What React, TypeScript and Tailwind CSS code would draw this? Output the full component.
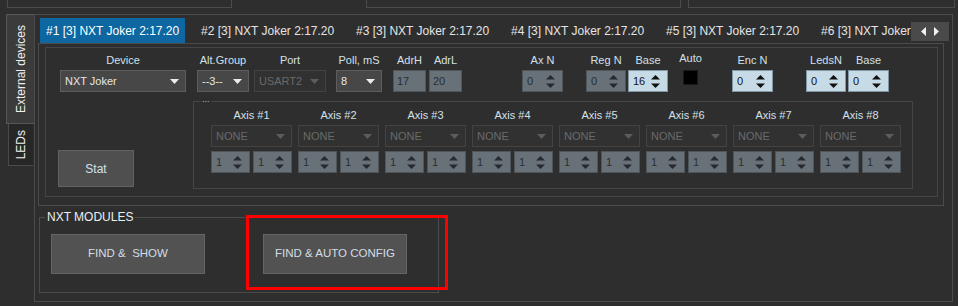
import React from 'react';

const LABEL = 'text-[11px] leading-[14px] text-[#d3e0ea] whitespace-nowrap';

function Caret({ color = '#e8e8e8' }: { color?: string }) {
  return (
    <svg width="9" height="5" viewBox="0 0 9 5" className="shrink-0">
      <path d="M0 0h9L4.5 5z" fill={color} />
    </svg>
  );
}

function Combo({ value, w, disabled }: { value: string; w: string; disabled?: boolean }) {
  return (
    <div
      className={`${w} h-[22px] flex items-center justify-between pl-[4px] pr-[6px] border text-[11px] ${
        disabled
          ? 'bg-[#313131] border-[#434343] text-[#6a6a6a]'
          : 'bg-[#474747] border-[#5d5d5d] text-[#e6e6e6]'
      }`}
    >
      <span>{value}</span>
      <Caret color={disabled ? '#5c5c5c' : '#ececec'} />
    </div>
  );
}

function Spin({ value, w, light }: { value: string; w: string; light?: boolean }) {
  const c = light ? '#111' : '#262a2d';
  return (
    <div
      className={`${w} h-[22px] flex items-center justify-between pl-[4px] pr-[7px] border text-[11px] ${
        light ? 'bg-[#c7dbe7] border-[#8197a5] text-[#111]' : 'bg-[#687178] border-[#4e555b] text-[#2a2e31]'
      }`}
    >
      <span>{value}</span>
      <svg width="9" height="13" viewBox="0 0 9 13">
        <path d="M4.5 0L9 4.5H0z" fill={c} />
        <path d="M0 8.5h9L4.5 13z" fill={c} />
      </svg>
    </div>
  );
}

function Edit({ value }: { value: string }) {
  return (
    <div className="w-[33px] h-[22px] flex items-center pl-[3px] border bg-[#687178] border-[#4e555b] text-[11px] text-[#2a2e31]">
      {value}
    </div>
  );
}

function Field({ label, ml, w, children }: { label: string; ml: string; w: string; children: React.ReactNode }) {
  return (
    <div className={`${ml} ${w} flex flex-col items-center gap-[3px] shrink-0`}>
      <span className={LABEL}>{label}</span>
      {children}
    </div>
  );
}

const tabs = [1, 2, 3, 4, 5, 6];
const axes = [1, 2, 3, 4, 5, 6, 7, 8];

export default function App() {
  return (
    <div className="w-[958px] h-[306px] bg-[#2e2e2e] relative overflow-hidden font-['Liberation_Sans',Arial,sans-serif]">
      {/* cut-off panels at top */}
      <div className="flex h-[14px]">
        <div className="ml-[7px] w-[225px] h-[8px] border-x border-b border-[#4b4b4b]" />
        <div className="ml-[134px] w-[315px] h-[8px] border-x border-b border-[#4b4b4b]" />
        <div className="ml-[7px] w-[267px] h-[8px] border-x border-b border-[#4b4b4b]" />
      </div>

      <div className="flex">
        {/* vertical tabs */}
        <div className="w-[34px] flex flex-col">
          <div className="ml-[6px] w-[28px] h-[110px] bg-[#3b3b3b] border-l border-y border-[#575757] flex items-center justify-center">
            <span className="[writing-mode:vertical-rl] rotate-180 text-[12px] text-[#f0f0f0] whitespace-nowrap">
              External devices
            </span>
          </div>
          <div className="ml-[8px] w-[25px] h-[42px] bg-[#272727] border-l border-b border-[#4b4b4b] flex items-center justify-center">
            <span className="[writing-mode:vertical-rl] rotate-180 text-[12px] text-[#f0f0f0]">LEDs</span>
          </div>
        </div>

        {/* outer panel */}
        <div className="w-[919px] h-[288px] border border-[#4b4b4b] flex flex-col">
          {/* tab header */}
          <div className="mt-[3px] h-[25px] flex">
            <div className="ml-[5px] w-[871px] flex gap-[10px] overflow-hidden">
              {tabs.map((n) => (
                <div
                  key={n}
                  className={`w-[145px] shrink-0 h-[25px] flex items-center px-[6px] text-[12px] whitespace-nowrap ${
                    n === 1 ? 'bg-[#0e67a0] text-white' : 'text-[#e4e4e4]'
                  }`}
                >
                  #{n} [3] NXT Joker 2:17.20
                </div>
              ))}
            </div>
            <div className="mt-[4px] w-[38px] h-[19px] bg-[#4a4a4a] flex items-center justify-around px-[6px]">
              <svg width="5" height="9" viewBox="0 0 5 9">
                <path d="M5 0v9L0 4.5z" fill="#f2f2f2" />
              </svg>
              <svg width="5" height="9" viewBox="0 0 5 9">
                <path d="M0 0v9l5-4.5z" fill="#f2f2f2" />
              </svg>
            </div>
          </div>

          {/* tab page */}
          <div className="ml-[3px] w-[906px] h-[163px] border border-[#4b4b4b]">
            <div className="ml-[6px] mt-[3px] w-[893px] h-[150px] border border-[#454545]">
              {/* top controls */}
              <div className="flex mt-[5px]">
                <Field label="Device" ml="ml-[14px]" w="w-[126px]">
                  <Combo value="NXT Joker" w="w-[126px]" />
                </Field>
                <Field label="Alt.Group" ml="ml-[11px]" w="w-[52px]">
                  <Combo value="--3--" w="w-[52px]" />
                </Field>
                <Field label="Port" ml="ml-[5px]" w="w-[72px]">
                  <Combo value="USART2" w="w-[72px]" disabled />
                </Field>
                <Field label="Poll, mS" ml="ml-[10px]" w="w-[46px]">
                  <Combo value="8" w="w-[46px]" />
                </Field>
                <Field label="AdrH" ml="ml-[11px]" w="w-[33px]">
                  <Edit value="17" />
                </Field>
                <Field label="AdrL" ml="ml-[3px]" w="w-[33px]">
                  <Edit value="20" />
                </Field>
                <Field label="Ax N" ml="ml-[60px]" w="w-[41px]">
                  <Spin value="0" w="w-[41px]" />
                </Field>
                <Field label="Reg N" ml="ml-[23px]" w="w-[40px]">
                  <Spin value="0" w="w-[40px]" />
                </Field>
                <Field label="Base" ml="ml-[2px]" w="w-[40px]">
                  <Spin value="16" w="w-[40px]" light />
                </Field>
                <div className="ml-[15px] w-[15px] flex flex-col items-center">
                  <span className={`${LABEL} -mt-[2px]`}>Auto</span>
                  <div className="mt-[5px] w-[15px] h-[15px] bg-black border border-[#1a1a1a]" />
                </div>
                <Field label="Enc N" ml="ml-[34px]" w="w-[41px]">
                  <Spin value="0" w="w-[41px]" light />
                </Field>
                <Field label="LedsN" ml="ml-[33px]" w="w-[40px]">
                  <Spin value="0" w="w-[40px]" light />
                </Field>
                <Field label="Base" ml="ml-[2px]" w="w-[41px]">
                  <Spin value="0" w="w-[41px]" light />
                </Field>
              </div>

              {/* stat + axes */}
              <div className="flex items-start mt-[9px]">
                <button className="ml-[12px] mt-[49px] w-[76px] h-[37px] bg-[#4f4f4f] border border-[#626262] text-[12px] text-[#d3e0ea]">
                  Stat
                </button>
                <div className="relative ml-[59px] w-[720px] h-[88px] border border-[#454545] pl-[17px] pt-[6px] flex gap-[6px]">
                  <span className="absolute -top-[9px] left-[7px] px-[1px] bg-[#2e2e2e] text-[9px] leading-[12px] text-[#b9c6d2]">
                    ...
                  </span>
                  {axes.map((a) => (
                    <div key={a} className="w-[81px] flex flex-col items-center gap-[3px]">
                      <span className={LABEL}>Axis #{a}</span>
                      <Combo value="NONE" w="w-[81px]" disabled />
                      <div className="w-[81px] flex justify-between mt-[1px]">
                        <Spin value="1" w="w-[39px]" />
                        <Spin value="1" w="w-[39px]" />
                      </div>
                    </div>
                  ))}
                </div>
              </div>
            </div>
          </div>

          {/* NXT modules */}
          <div className="relative ml-[4px] mt-[11px] w-[400px] h-[76px] border border-[#4b4b4b] flex items-start pt-[16px]">
            <span className="absolute -top-[8px] left-[5px] px-[2px] bg-[#2e2e2e] text-[12px] leading-[14px] text-[#e8eef4]">
              NXT MODULES
            </span>
            <button className="ml-[11px] w-[154px] h-[40px] bg-[#525252] border border-[#656565] text-[11.5px] text-[#d3dde6] whitespace-pre">
              FIND &amp;  SHOW
            </button>
            <button className="ml-[58px] w-[144px] h-[40px] bg-[#525252] border border-[#656565] text-[11.5px] text-[#d3dde6]">
              FIND &amp; AUTO CONFIG
            </button>
          </div>
        </div>
      </div>

      {/* highlight annotation */}
      <div className="absolute left-[246px] top-[215px] w-[202px] h-[75px] border-[3px] border-[#ff0000]" />
    </div>
  );
}
